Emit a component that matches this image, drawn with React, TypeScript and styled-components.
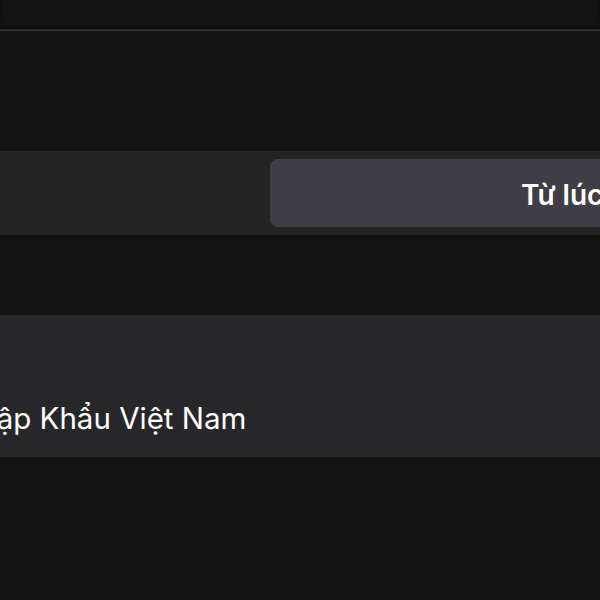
import React from "react";
import styled, { createGlobalStyle } from "styled-components";

const Global = createGlobalStyle`
  html, body {
    margin: 0;
    padding: 0;
    background: #131313;
    overflow: hidden;
  }
  body {
    font-family: Inter, "Noto Sans", "Liberation Sans", sans-serif;
    color: #ffffff;
  }
`;

const Page = styled.div`
  width: 600px;
  height: 600px;
  overflow: hidden;
  display: flex;
  flex-direction: column;
  background: #131313;
`;

const Header = styled.header`
  height: 29px;
  border-bottom: 2px solid #2e2e2e;
  box-shadow: inset 0 -3px 3px #0c0c0c;
  flex-shrink: 0;
`;

const FilterBand = styled.section`
  margin-top: 120px;
  height: 84px;
  box-sizing: border-box;
  padding: 8px 0 8px 270px;
  background: #232323;
  display: flex;
  flex-shrink: 0;
`;

const Segment = styled.button<{ $active?: boolean }>`
  flex: 1;
  margin-right: -200px;
  border: none;
  border-radius: 8px;
  background: ${(p) => (p.$active ? "#3f3e44" : "transparent")};
  color: #ffffff;
  font-family: Inter, "Noto Sans", "Liberation Sans", sans-serif;
  font-size: 28px;
  font-weight: 600;
  text-align: left;
  padding: 3px 0 0 251px;
  white-space: nowrap;
  display: flex;
  align-items: center;
`;

const InfoCard = styled.section`
  margin-top: 80px;
  height: 142px;
  box-sizing: border-box;
  padding: 86px 0 21px 0;
  background: #27272a;
  flex-shrink: 0;
`;

const Name = styled.div`
  margin-left: -43px;
  font-size: 29.5px;
  line-height: 35px;
  font-weight: 400;
  white-space: nowrap;
`;

export default function App() {
  return (
    <>
      <Global />
      <Page>
        <Header />
        <FilterBand>
          <Segment $active>Từ lúc</Segment>
        </FilterBand>
        <InfoCard>
          <Name>Nhập Khẩu Việt Nam</Name>
        </InfoCard>
      </Page>
    </>
  );
}
